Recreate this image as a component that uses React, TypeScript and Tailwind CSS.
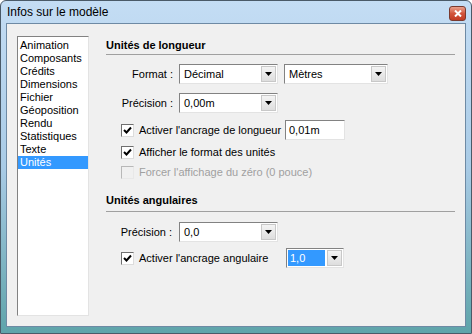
import React from "react";

const font = { fontFamily: '"Liberation Sans", Arial, sans-serif' };

function Arrow() {
  return (
    <svg width="7" height="4" viewBox="0 0 7 4">
      <polygon points="0,0 7,0 3.5,4" fill="#000" />
    </svg>
  );
}

function Select({ value, width, highlight }: { value: string; width: number; highlight?: boolean }) {
  return (
    <div
      className="flex h-full items-stretch border border-t-[#828282] border-l-[#828282] border-b-[#e3e3e3] border-r-[#e3e3e3] bg-white"
      style={{ width }}
    >
      <div className="flex flex-1 items-center p-[1px]">
        {highlight ? (
          <div className="flex h-full w-full items-center bg-[#3399ff] pl-[2px] text-white">{value}</div>
        ) : (
          <div className="pl-[3px]">{value}</div>
        )}
      </div>
      <div className="m-[1px] flex w-[15px] items-center justify-center border border-[#c8c8c8] bg-gradient-to-b from-[#f4f4f4] to-[#dedede]">
        <Arrow />
      </div>
    </div>
  );
}

function Check({ checked, disabled }: { checked?: boolean; disabled?: boolean }) {
  return (
    <div
      className={
        "flex h-[13px] w-[13px] shrink-0 items-center justify-center border " +
        (disabled
          ? "border-t-[#b8b8b8] border-l-[#b8b8b8] border-b-[#e8e8e8] border-r-[#e8e8e8] bg-[#f0f0f0]"
          : "border-t-[#6f6f6f] border-l-[#6f6f6f] border-b-[#dcdcdc] border-r-[#dcdcdc] bg-white")
      }
    >
      {checked && (
        <svg width="9" height="9" viewBox="0 0 9 9">
          <polyline points="1,4 3.5,6.5 8,1.5" fill="none" stroke="#000" strokeWidth="2" />
        </svg>
      )}
    </div>
  );
}

export default function App() {
  const items = ["Animation", "Composants", "Crédits", "Dimensions", "Fichier", "Géoposition", "Rendu", "Statistiques", "Texte", "Unités"];
  return (
    <div
      className="flex h-[334px] w-[472px] flex-col overflow-hidden rounded-t-[6px] border border-[#4a5a68] bg-gradient-to-b from-[#c4ddf4] via-[#a9cbe6] to-[#5ea4aa] text-[11px] text-black"
      style={font}
    >
      <div className="flex h-[22px] shrink-0 items-center justify-between pl-[6px] pr-[5px]">
        <span className="text-[12px] text-black">Infos sur le modèle</span>
        <div className="mt-[2px] flex h-[15px] w-[17px] items-center justify-center rounded-[3px] border border-[#7a3a2e] bg-gradient-to-b from-[#e8a08c] via-[#d2553c] to-[#c23a22]">
          <svg width="8" height="7" viewBox="0 0 8 7">
            <path d="M1 0.5 L7 6.5 M7 0.5 L1 6.5" stroke="#fff" strokeWidth="2" />
          </svg>
        </div>
      </div>
      <div className="mx-[5px] mb-[6px] flex flex-1 border border-[#6e8aa4] bg-[#f0f0f0]">
        <div className="pl-[10px] pt-[12px] pb-[10px]">
          <div className="h-full w-[72px] border border-t-[#828282] border-l-[#828282] border-b-[#e3e3e3] border-r-[#e3e3e3] bg-white pt-[2px]">
            {items.map((it) => (
              <div
                key={it}
                className={"h-[13px] pl-[2px] leading-[13px] " + (it === "Unités" ? "bg-[#3399ff] text-white" : "")}
              >
                {it}
              </div>
            ))}
          </div>
        </div>
        <div className="flex flex-1 flex-col pl-[17px] pr-[10px] pt-[14px]">
          <div className="h-[14px] font-bold leading-[14px]">Unités de longueur</div>
          <div className="mt-[2px] h-[1px] bg-[#a0a0a0]" />
          <div className="mt-[9px] flex h-[20px] items-center">
            <div className="w-[67px] text-right">Format :</div>
            <div className="ml-[6px] h-full">
              <Select value="Décimal" width={99} />
            </div>
            <div className="ml-[6px] h-full">
              <Select value="Mètres" width={104} />
            </div>
          </div>
          <div className="mt-[9px] flex h-[20px] items-center">
            <div className="w-[67px] text-right">Précision :</div>
            <div className="ml-[6px] h-full">
              <Select value="0,00m" width={99} />
            </div>
          </div>
          <div className="mt-[7px] flex h-[20px] items-center pl-[15px]">
            <Check checked />
            <div className="ml-[5px] w-[146px]">Activer l'ancrage de longueur</div>
            <div className="flex h-full w-[60px] items-center border border-t-[#828282] border-l-[#828282] border-b-[#e3e3e3] border-r-[#e3e3e3] bg-white pl-[3px]">
              0,01m
            </div>
          </div>
          <div className="mt-[5px] flex h-[14px] items-center pl-[15px]">
            <Check checked />
            <div className="ml-[5px]">Afficher le format des unités</div>
          </div>
          <div className="mt-[6px] flex h-[14px] items-center pl-[15px]">
            <Check disabled />
            <div className="ml-[5px] text-[#a0a0a0]">Forcer l'affichage du zéro (0 pouce)</div>
          </div>
          <div className="mt-[14px] h-[14px] font-bold leading-[14px]">Unités angulaires</div>
          <div className="mt-[4px] h-[1px] bg-[#a0a0a0]" />
          <div className="mt-[10px] flex h-[20px] items-center">
            <div className="w-[66px] text-right">Précision :</div>
            <div className="ml-[7px] h-full">
              <Select value="0,0" width={99} />
            </div>
          </div>
          <div className="mt-[6px] flex h-[20px] items-center pl-[15px]">
            <Check checked />
            <div className="ml-[5px] w-[147px]">Activer l'ancrage angulaire</div>
            <div className="h-full">
              <Select value="1,0" width={58} highlight />
            </div>
          </div>
        </div>
      </div>
    </div>
  );
}
